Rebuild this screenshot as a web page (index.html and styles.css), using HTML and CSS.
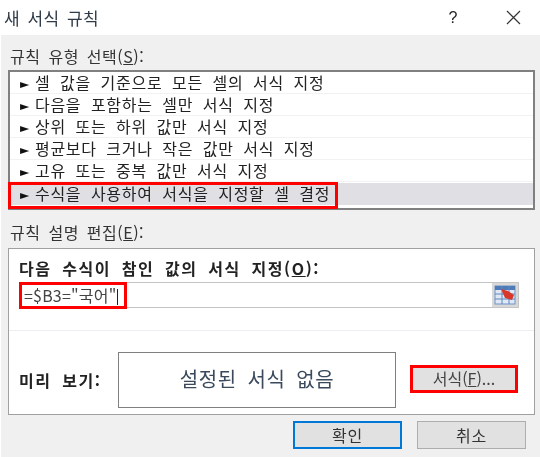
FILE: index.html
```html
<!DOCTYPE html>
<html lang="ko">
<head>
  <meta charset="UTF-8">
  <meta name="viewport" content="width=device-width, initial-scale=1.0">
  <title>새 서식 규칙</title>
  <link rel="stylesheet" href="styles.css">
</head>
<body>
  <div id="dialog">
    <div id="title-bar">
      <span class="title">새 서식 규칙</span>
      <span class="help">?</span>
      <svg class="close" width="15" height="15" viewBox="0 0 15 15">
        <path d="M1 1 L14 14 M14 1 L1 14" stroke="#333" stroke-width="1.2" fill="none"/>
      </svg>
    </div>
    <div id="content">
      <div class="group-label">규칙 유형 선택(<u>S</u>):</div>
      <div id="rule-list">
        <div class="rule"><span class="arrow">►</span>셀 값을 기준으로 모든 셀의 서식 지정</div>
        <div class="rule"><span class="arrow">►</span>다음을 포함하는 셀만 서식 지정</div>
        <div class="rule"><span class="arrow">►</span>상위 또는 하위 값만 서식 지정</div>
        <div class="rule"><span class="arrow">►</span>평균보다 크거나 작은 값만 서식 지정</div>
        <div class="rule"><span class="arrow">►</span>고유 또는 중복 값만 서식 지정</div>
        <div class="rule selected">
          <span class="arrow">►</span>수식을 사용하여 서식을 지정할 셀 결정
          <div class="mark rule-mark"></div>
        </div>
      </div>
      <div class="group-label second">규칙 설명 편집(<u>E</u>):</div>
      <div id="edit-panel">
        <div class="edit-top">
          <div class="formula-label">다음 수식이 참인 값의 서식 지정(<u>O</u>):</div>
          <div class="formula-box">
            <div class="formula-text">=$B3="국어"<span class="caret"></span></div>
            <div class="mark formula-mark"></div>
            <div class="range-btn">
              <svg width="22" height="20" viewBox="0 0 22 20">
                <rect x="1" y="1" width="20" height="18" fill="#dfe8f4" stroke="#6f93c6"/>
                <rect x="1" y="1" width="20" height="4" fill="#4f7ab8"/>
                <path d="M1 9 H21 M1 14 H21 M8 1 V19 M15 1 V19" stroke="#5f88c0" fill="none"/>
                <path d="M7 4 L14 6 L20 10 L18 15 L11 13 Z" fill="#d8382c"/>
              </svg>
            </div>
          </div>
        </div>
        <div class="edit-bottom">
          <div class="preview-label">미리 보기:</div>
          <div class="preview-box">설정된 서식 없음</div>
          <div class="format-btn">서식(<u>F</u>)...</div>
        </div>
      </div>
      <div id="buttons">
        <button class="btn ok">확인</button>
        <button class="btn">취소</button>
      </div>
    </div>
  </div>
</body>
</html>
```

FILE: styles.css
```css
html, body {
  margin: 0;
  padding: 0;
  background-color: #fff;
}

#dialog {
  width: 540px;
  height: 457px;
  overflow: hidden;
  font-family: "Noto Sans CJK KR", "Noto Sans", sans-serif;
  font-size: 16px;
  letter-spacing: 0.7px;
  word-spacing: 4.5px;
  color: #222;
  filter: blur(0.5px);
}

#title-bar {
  height: 35px;
  display: flex;
  align-items: center;
  background-color: #fff;
}

.title {
  margin-left: 4px;
  font-size: 17px;
  letter-spacing: 0.3px;
  word-spacing: 2.5px;
  color: #2f3b48;
}

.help {
  margin-left: auto;
  font-family: "Liberation Sans", sans-serif;
  font-size: 16px;
}

.close {
  margin: 0 19px 0 48px;
}

#content {
  margin-left: 1px;
  height: 422px;
  padding: 10px 5px 0 7px;
  box-sizing: border-box;
  background-color: #f0f0f0;
}

.group-label {
  height: 25px;
  line-height: 22px;
  padding-left: 2px;
  letter-spacing: 0.5px;
  word-spacing: 3px;
  color: #333;
}

.group-label.second {
  margin-top: 11px;
  height: 27px;
}

#rule-list {
  height: 140px;
  box-sizing: border-box;
  border: 2px solid #808080;
  background-color: #fff;
}

.rule {
  position: relative;
  height: 22px;
  line-height: 21px;
  padding-left: 10px;
  box-sizing: border-box;
  border-bottom: 1px solid #f2f2f2;
  white-space: nowrap;
}

.arrow {
  display: inline-block;
  width: 15px;
  font-family: "DejaVu Sans", sans-serif;
  font-size: 12px;
  letter-spacing: 0;
  color: #111;
  vertical-align: 1px;
}

.rule.selected {
  height: 22px;
  margin-top: 1px;
  border-bottom: none;
  background-color: #e0e0e4;
}

.mark {
  position: absolute;
  box-sizing: border-box;
  border: 3px solid #f00;
}

.rule-mark {
  left: -2px;
  top: -1px;
  width: 330px;
  height: 27px;
}

#edit-panel {
  height: 167px;
  box-sizing: border-box;
  border: 1px solid #a0a0a0;
  background-color: #fff;
}

.edit-top {
  height: 82px;
  padding: 8px 15px 0 10px;
  box-sizing: border-box;
  border-bottom: 1px solid #eeeef2;
}

.formula-label {
  height: 25px;
  line-height: 22px;
  font-weight: bold;
  letter-spacing: 1.6px;
}

.formula-box {
  position: relative;
  height: 26px;
  display: flex;
  box-sizing: border-box;
  border: 1px solid #c4c4c4;
}

.formula-text {
  flex: 1;
  padding-left: 4px;
  line-height: 24px;
  letter-spacing: 0.2px;
  color: #444;
}

.caret {
  display: inline-block;
  width: 1px;
  height: 16px;
  margin-left: 1px;
  vertical-align: -3px;
  background-color: #222;
}

.formula-mark {
  left: -1px;
  top: -1px;
  width: 108px;
  height: 27px;
}

.range-btn {
  width: 26px;
  display: flex;
  align-items: center;
  justify-content: center;
  background-color: #d8d8d8;
}

.edit-bottom {
  height: 83px;
  display: flex;
  align-items: flex-start;
  padding: 21px 15px 0 10px;
  box-sizing: border-box;
}

.preview-label {
  width: 99px;
  margin-top: 16px;
  font-weight: bold;
  letter-spacing: 1.6px;
}

.preview-box {
  width: 278px;
  height: 56px;
  line-height: 52px;
  box-sizing: border-box;
  border: 1px solid #808080;
  text-align: center;
  font-size: 20px;
  letter-spacing: 0.6px;
  color: #3a4a5c;
}

.format-btn {
  width: 108px;
  height: 28px;
  line-height: 21px;
  margin-left: 14px;
  margin-top: 13px;
  box-sizing: border-box;
  border: 3px solid #f00;
  background-color: #e1e1e1;
  text-align: center;
  letter-spacing: 0;
  color: #444;
}

#buttons {
  display: flex;
  gap: 15px;
  margin-top: 6px;
  padding-left: 285px;
}

.btn {
  width: 109px;
  height: 28px;
  padding: 0;
  font: inherit;
  letter-spacing: inherit;
  color: #333;
  background-color: #e1e1e1;
  border: 1px solid #adadad;
}

.btn.ok {
  border: 2px solid #0078d7;
}
```
